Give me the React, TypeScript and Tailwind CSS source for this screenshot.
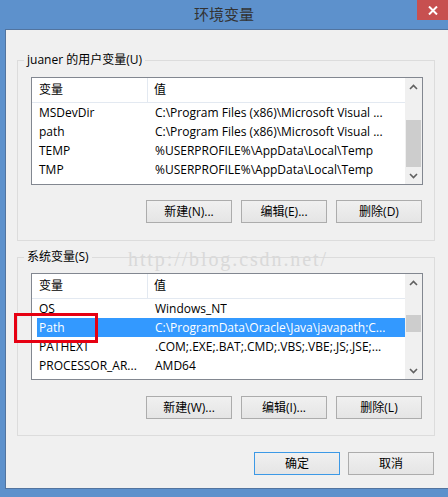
import React from "react";

const FONT = "font-['Open_Sans','Noto_Sans_CJK_SC',sans-serif]";

type Row = { name: string; value: string; selected?: boolean };

const userVars: Row[] = [
  { name: "MSDevDir", value: "C:\\Program Files (x86)\\Microsoft Visual ..." },
  { name: "path", value: "C:\\Program Files (x86)\\Microsoft Visual ..." },
  { name: "TEMP", value: "%USERPROFILE%\\AppData\\Local\\Temp" },
  { name: "TMP", value: "%USERPROFILE%\\AppData\\Local\\Temp" },
];

const sysVars: Row[] = [
  { name: "OS", value: "Windows_NT" },
  {
    name: "Path",
    value: "C:\\ProgramData\\Oracle\\Java\\javapath;C...",
    selected: true,
  },
  { name: "PATHEXT", value: ".COM;.EXE;.BAT;.CMD;.VBS;.VBE;.JS;.JSE;..." },
  { name: "PROCESSOR_AR...", value: "AMD64" },
  { name: "PROCESSOR_ID...", value: "Intel64 Family 6 Model 58 Stepping 9, G..." },
];

const Chevron = ({ up }: { up?: boolean }) => (
  <svg width="9" height="6" viewBox="0 0 9 6">
    <path
      d={up ? "M1 5 L4.5 1.5 L8 5" : "M1 1 L4.5 4.5 L8 1"}
      fill="none"
      stroke="#606060"
      strokeWidth="1.6"
    />
  </svg>
);

type TList = {
  rows: Row[];
  heightClass: string;
  thumbClass: string;
};

const ListView = ({ rows, heightClass, thumbClass }: TList) => (
  <div
    className={`flex w-[392px] border border-[#828790] bg-white overflow-hidden ${heightClass}`}
  >
    <div className="flex-1 min-w-0 overflow-hidden">
      <div className="h-[25px] flex border-b border-[#e3e9f1] text-[12px] text-black">
        <div className="w-[116px] shrink-0 pl-[7px] flex items-center border-r border-[#e3e9f1]">
          变量
        </div>
        <div className="pl-[6px] flex items-center">值</div>
      </div>
      {rows.map((row) => (
        <div
          key={row.name}
          className={`h-[19px] ml-[5px] flex items-center text-[12px] whitespace-nowrap ${
            row.selected ? "bg-[#3399ff] text-white" : "text-black"
          }`}
        >
          <div className="w-[111px] shrink-0 pl-[2px] overflow-hidden">
            {row.name}
          </div>
          <div className="pl-[7px] overflow-hidden">{row.value}</div>
        </div>
      ))}
    </div>
    <div className="w-[17px] shrink-0 bg-[#f0f0f0] flex flex-col">
      <div className="h-[17px] flex items-center justify-center">
        <Chevron up />
      </div>
      <div className="flex-1 flex flex-col">
        <div className={`mx-[1px] bg-[#cdcdcd] ${thumbClass}`} />
      </div>
      <div className="h-[17px] flex items-center justify-center">
        <Chevron />
      </div>
    </div>
  </div>
);

const Btn = ({ label, focus }: { label: string; focus?: boolean }) => (
  <button
    className={`h-[23px] w-[86px] flex items-center justify-center border bg-linear-to-b from-[#f0f0f0] to-[#e5e5e5] text-[12px] text-black ${
      focus ? "border-[#3c99e6]" : "border-[#acacac]"
    }`}
  >
    {label}
  </button>
);

export default function App() {
  return (
    <div
      className={`relative w-[448px] h-[497px] bg-[#5d91cc] flex flex-col overflow-hidden ${FONT}`}
    >
      {/* title bar */}
      <div className="h-[29px] flex">
        <div className="flex-1" />
        <div className="flex items-center text-[15px] text-[#333] pb-[1px]">
          环境变量
        </div>
        <div className="flex-1 flex justify-end items-start">
          <div className="w-[31px] h-[20px] bg-[#c75050] flex items-center justify-center">
            <svg width="10" height="9" viewBox="0 0 10 9">
              <path
                d="M1 0.5 L9 8.5 M9 0.5 L1 8.5"
                stroke="#fff"
                strokeWidth="2"
              />
            </svg>
          </div>
        </div>
      </div>

      {/* dialog body */}
      <div className="flex-1 ml-[5px] mb-[8px] bg-[#f0f0f0] border border-r-0 border-[#52749f] pt-[30px] pl-[11px] flex flex-col">
        <div className="w-[418px] border border-[#dcdcdc] pb-[17px]">
          <div className="-mt-[9px] ml-[6px] w-fit px-[3px] bg-[#f0f0f0] leading-[16px] text-[12px] text-black">
            juaner 的用户变量(U)
          </div>
          <div className="mt-[9px] ml-[13px]">
            <ListView
              rows={userVars}
              heightClass="h-[108px]"
              thumbClass="mt-[25px] h-[47px]"
            />
          </div>
          <div className="mt-[15px] pr-[12px] flex justify-end gap-[9px]">
            <Btn label="新建(N)..." />
            <Btn label="编辑(E)..." />
            <Btn label="删除(D)" />
          </div>
        </div>

        <div className="mt-[16px] w-[418px] border border-[#dcdcdc] pb-[16px]">
          <div className="-mt-[9px] ml-[6px] w-fit px-[3px] bg-[#f0f0f0] leading-[16px] text-[12px] text-black">
            系统变量(S)
          </div>
          <div className="mt-[8px] ml-[13px]">
            <ListView
              rows={sysVars}
              heightClass="h-[107px]"
              thumbClass="mt-[24px] h-[17px]"
            />
          </div>
          <div className="mt-[16px] pr-[12px] flex justify-end gap-[9px]">
            <Btn label="新建(W)..." />
            <Btn label="编辑(I)..." />
            <Btn label="删除(L)" />
          </div>
        </div>

        <div className="mt-[16px] pr-[14px] flex justify-end gap-[8px]">
          <Btn label="确定" focus />
          <Btn label="取消" />
        </div>
      </div>

      {/* blog watermark */}
      <div className="absolute left-[128px] top-[244px] font-['Liberation_Serif',serif] text-[20px] tracking-[1.9px] text-[#d9d9d9] pointer-events-none">
        http://blog.csdn.net/
      </div>

      {/* red annotation box */}
      <div className="absolute left-[14px] top-[313px] w-[84px] h-[30px] border-[3px] border-[#e60012]" />
    </div>
  );
}
